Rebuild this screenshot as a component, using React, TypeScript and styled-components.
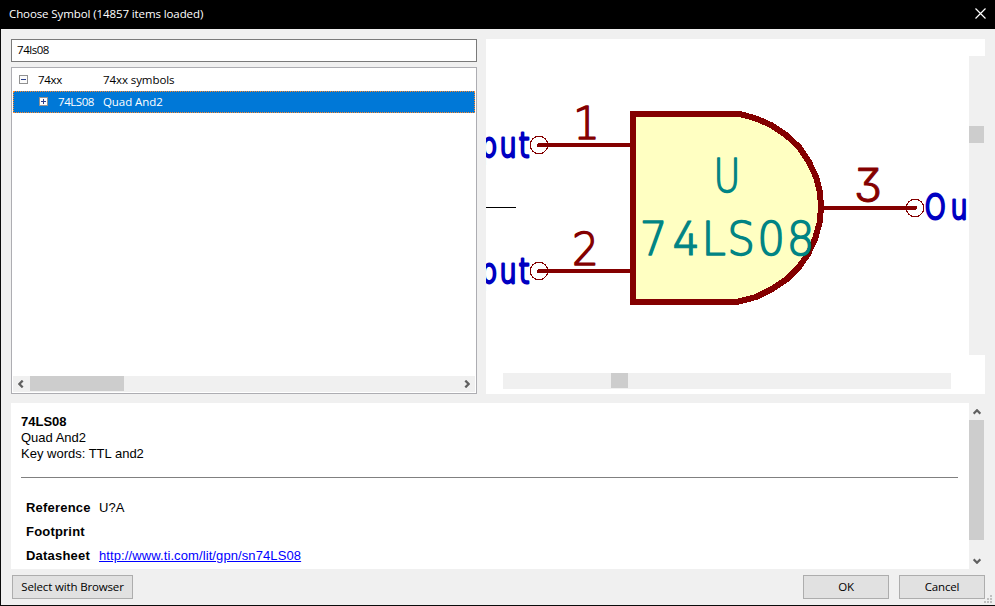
import React from "react";
import styled, { createGlobalStyle } from "styled-components";

const GlobalStyle = createGlobalStyle`
  * { box-sizing: border-box; }
  body { margin: 0; background: #f0f0f0; overflow: hidden; }
`;

const Dialog = styled.div`
  width: 995px;
  height: 606px;
  display: flex;
  flex-direction: column;
  background: #f0f0f0;
  border-left: 1px solid #0b0b0b;
  border-bottom: 1px solid #0b0b0b;
  font: 11.5px/16px "Open Sans", sans-serif;
  color: #000;
  white-space: nowrap;
`;

const TitleBar = styled.header`
  height: 29px;
  margin-left: -1px;
  padding: 0 9px;
  display: flex;
  align-items: center;
  justify-content: space-between;
  background: #000;
  color: #fff;
  letter-spacing: -0.1px;
  flex: none;
  span { margin-top: -2px; }
  svg { margin-top: -3px; }
`;

const Upper = styled.div`
  display: flex;
  justify-content: space-between;
  height: 355px;
  margin: 10px 10px 0 10px;
  flex: none;
`;

const Chooser = styled.div`
  width: 466px;
  display: flex;
  flex-direction: column;
  gap: 5px;
`;

const SearchBox = styled.div`
  height: 23px;
  padding: 2px 5px;
  border: 1px solid #7a7a7a;
  background: #fff;
  letter-spacing: -0.45px;
`;

const Tree = styled.div`
  flex: 1;
  display: flex;
  flex-direction: column;
  padding: 1px;
  border: 1px solid #adadb2;
  background: #fff;
`;

const TreeRow = styled.div<{ $depth: number; $selected?: boolean }>`
  height: 22px;
  display: flex;
  align-items: center;
  padding-left: ${(p) => 5 + p.$depth * 20}px;
  border: 1px dotted ${(p) => (p.$selected ? "#ff8728" : "transparent")};
  background: ${(p) => (p.$selected ? "#0078d7" : "transparent")};
  color: ${(p) => (p.$selected ? "#fff" : "#000")};
  svg { margin-top: -1px; }
`;

const RowName = styled.span<{ $depth: number }>`
  width: ${(p) => 65 - p.$depth * 20}px;
  margin-left: 10px;
  letter-spacing: ${(p) => (p.$depth ? "-0.45px" : "-0.3px")};
`;

const RowText = styled.span`
  letter-spacing: -0.08px;
`;

const TreeSpace = styled.div`
  flex: 1;
`;

const HScroll = styled.div`
  height: 16px;
  display: flex;
  align-items: center;
  justify-content: space-between;
  padding: 0 5px;
  background: #f0f0f0;
`;

const HThumb = styled.div<{ $w: number; $gap: number }>`
  width: ${(p) => p.$w}px;
  height: 15px;
  margin-left: ${(p) => p.$gap}px;
  margin-right: auto;
  align-self: flex-start;
  background: #cdcdcd;
`;

const Preview = styled.div`
  width: 499px;
  display: flex;
  flex-direction: column;
  background: #fff;
`;

const PreviewMain = styled.div`
  display: flex;
  height: 334px;
`;

const Canvas = styled.svg`
  width: 483px;
  height: 334px;
  display: block;
  overflow: hidden;
`;

const VTrack = styled.div`
  width: 16px;
  height: 299px;
  margin-top: 17px;
  padding-top: 70px;
  background: #f0f0f0;
`;

const VThumb = styled.div<{ $h: number }>`
  width: 15px;
  height: ${(p) => p.$h}px;
  background: #cdcdcd;
`;

const HTrack = styled.div`
  display: flex;
  width: 448px;
  height: 16px;
  margin-left: 17px;
  background: #f0f0f0;
`;

const Details = styled.div`
  display: flex;
  height: 166px;
  margin: 9px 10px 0 10px;
  background: #fff;
  font: 13px/16px "Liberation Sans", Arial, sans-serif;
  flex: none;
`;

const DetailsBody = styled.div`
  flex: 1;
  padding: 11px 11px 0 10px;
  overflow: hidden;
`;

const Rule = styled.hr`
  height: 1px;
  margin: 15px 0 18px;
  border: 0;
  background: #808080;
`;

const Fields = styled.dl`
  display: grid;
  grid-template-columns: 73px 1fr;
  grid-auto-rows: 24px;
  align-items: center;
  margin: 0;
  padding-left: 5px;
  dt { font-weight: bold; letter-spacing: 0.2px; }
  dd { margin: 0; letter-spacing: 0.1px; }
`;

const Link = styled.a`
  color: #00f;
  text-decoration: underline;
`;

const DetailsScroll = styled.div`
  width: 16px;
  display: flex;
  flex-direction: column;
  align-items: flex-start;
  gap: 5px;
  background: #f0f0f0;
  padding: 6px 0 5px;
  svg { margin-left: 4px; flex: none; }
  svg:last-child { margin-top: auto; }
`;

const Footer = styled.footer`
  display: flex;
  align-items: flex-start;
  padding: 6px 0 0 11px;
  height: 36px;
`;

const Button = styled.button<{ $w: number }>`
  width: ${(p) => p.$w}px;
  height: 24px;
  flex: none;
  padding: 0;
  border: 1px solid #adadad;
  background: #e1e1e1;
  color: #000;
  font: inherit;
  letter-spacing: -0.15px;
`;

const Answers = styled.div`
  display: flex;
  gap: 10px;
  margin-left: auto;
`;

const Grip = styled.svg`
  align-self: flex-end;
  flex: none;
  margin: 0 3px 2px -2px;
`;

const StrokeText = styled.text`
  font: 200 46px "DejaVu Sans", sans-serif;
  stroke-linejoin: round;
  stroke-width: 1.5px;
`;

const PinNumber = styled(StrokeText)`
  font-size: 44.5px;
`;

const PinName = styled(StrokeText)`
  font-size: 34px;
  stroke-width: 2.9px;
  fill: #0000c2;
  stroke: #0000c2;
`;

const FlatDigit = styled.tspan`
  font-family: Inter, sans-serif;
  font-weight: 300;
  font-feature-settings: "cv02", "cv09";
  stroke-width: 1px;
`;

const turns = { up: 0, right: 90, down: 180, left: 270 };

function Chevron({ dir }: { dir: keyof typeof turns }) {
  const side = dir === "left" || dir === "right";
  return (
    <svg width={side ? 6 : 8} height={side ? 8 : 6} viewBox={side ? "-3 -4 6 8" : "-4 -3 8 6"}>
      <path d="M-3.4 1.7 0-1.7 3.4 1.7" fill="none" stroke="#606060" strokeWidth="2.3" transform={`rotate(${turns[dir]})`} />
    </svg>
  );
}

function Expander({ open }: { open?: boolean }) {
  return (
    <svg width="9" height="9" viewBox="0 0 9 9" shapeRendering="crispEdges">
      <rect x=".5" y=".5" width="8" height="8" fill="#fbfbfb" stroke="#919191" />
      <path d={open ? "M2 4.5h5" : "M2 4.5h5M4.5 2v5"} stroke="#2b3f8c" />
    </svg>
  );
}

const RED = "#840000";
const TEAL = "#008484";

function AndGate() {
  return (
    <Canvas viewBox="486 39 483 334">
      <path d="M486 207.5h30" stroke="#000" shapeRendering="crispEdges" />
      <path
        d="M633 114H740L756 118.5 771 125 786 135 799 147 809 162 816 177 820 192 821 208 819.5 223 815 239 808 254 799 267 787 279 772 289 756 297 737 302H633Z"
        fill="#ffffc2" stroke={RED} strokeWidth="6" shapeRendering="crispEdges"
      />
      <g stroke={RED} strokeWidth="4" strokeLinecap="round" shapeRendering="crispEdges">
        <path d="M539 145H631M539 271H631M822 208H915" />
      </g>
      <g fill="none" stroke={RED} shapeRendering="crispEdges">
        <circle cx="539" cy="145" r="8.7" />
        <circle cx="539" cy="271" r="8.7" />
        <circle cx="915" cy="208" r="8.7" />
      </g>
      <g fill={RED} stroke={RED}>
        <PinNumber transform="translate(573 138.5) scale(.95 1)">1</PinNumber>
        <PinNumber transform="translate(572 264.5) scale(.95 1)">2</PinNumber>
        <StrokeText transform="translate(854 201.5)"><FlatDigit>3</FlatDigit></StrokeText>
      </g>
      <g fill={TEAL} stroke={TEAL}>
        <StrokeText transform="translate(713.5 192) scale(.8 1)">U</StrokeText>
        <StrokeText transform="translate(0 254.5) scale(.95 1)" x="673.5 707.2 738.5 765.5 797 828.3">
          7<FlatDigit>4</FlatDigit>LS08
        </StrokeText>
      </g>
      <PinName transform="translate(0 157) scale(.8 1)" x="600 624.5 648.5">put</PinName>
      <PinName transform="translate(0 283) scale(.8 1)" x="600 624.5 648.5">put</PinName>
      <PinName transform="translate(0 219) scale(.8 1)" x="1155.5 1188">Ou</PinName>
    </Canvas>
  );
}

export default function App() {
  return (
    <>
      <GlobalStyle />
      <Dialog>
        <TitleBar>
          <span>Choose Symbol (14857 items loaded)</span>
          <svg width="11" height="11" viewBox="0 0 11 11">
            <path d="M.5.5l10 10M10.5.5l-10 10" stroke="#fff" strokeWidth="1.2" />
          </svg>
        </TitleBar>
        <Upper>
          <Chooser>
            <SearchBox>74ls08</SearchBox>
            <Tree>
              <TreeRow $depth={0}>
                <Expander open />
                <RowName $depth={0}>74xx</RowName>
                <RowText>74xx symbols</RowText>
              </TreeRow>
              <TreeRow $depth={1} $selected>
                <Expander />
                <RowName $depth={1}>74LS08</RowName>
                <RowText>Quad And2</RowText>
              </TreeRow>
              <TreeSpace />
              <HScroll>
                <Chevron dir="left" />
                <HThumb $w={94} $gap={6} />
                <Chevron dir="right" />
              </HScroll>
            </Tree>
          </Chooser>
          <Preview>
            <PreviewMain>
              <AndGate />
              <VTrack><VThumb $h={17} /></VTrack>
            </PreviewMain>
            <HTrack><HThumb $w={17} $gap={108} /></HTrack>
          </Preview>
        </Upper>
        <Details>
          <DetailsBody>
            <div><b>74LS08</b></div>
            <div>Quad And2</div>
            <div>Key words: TTL and2</div>
            <Rule />
            <Fields>
              <dt>Reference</dt><dd>U?A</dd>
              <dt>Footprint</dt><dd />
              <dt>Datasheet</dt><dd><Link>http://www.ti.com/lit/gpn/sn74LS08</Link></dd>
            </Fields>
          </DetailsBody>
          <DetailsScroll>
            <Chevron dir="up" />
            <VThumb $h={120} />
            <Chevron dir="down" />
          </DetailsScroll>
        </Details>
        <Footer>
          <Button $w={121}>Select with Browser</Button>
          <Answers>
            <Button $w={86}>OK</Button>
            <Button $w={86}>Cancel</Button>
          </Answers>
          <Grip width="9" height="8" viewBox="-1 0 9 8" fill="#bfbfbf">
            <path d="M6 0h2v2H6zM3 3h2v2H3zM6 3h2v2H6zM0 6h2v2H0zM3 6h2v2H3zM6 6h2v2H6z" />
          </Grip>
        </Footer>
      </Dialog>
    </>
  );
}
